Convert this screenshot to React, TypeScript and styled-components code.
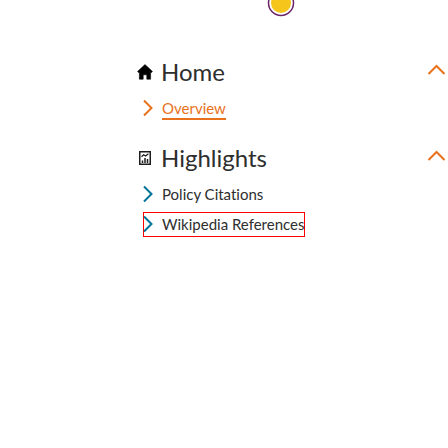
import React, { useState } from "react";
import styled, { createGlobalStyle } from "styled-components";

const GlobalStyle = createGlobalStyle`
  *, *::before, *::after { box-sizing: border-box; }
  body {
    margin: 0;
    background: #fff;
    color: #2e2e2e;
    font-family: Lato, "Open Sans", sans-serif;
    font-variant-ligatures: none;
  }
`;

const Page = styled.div`
  min-height: 100vh;
  overflow: hidden;
`;

const Header = styled.header`
  display: flex;
  justify-content: center;
  height: 52px;
  padding-left: 114px;
`;

const Marker = styled.svg`
  display: block;
  width: 28px;
  height: 28px;
  margin-top: -11px;
`;

const Nav = styled.nav`
  display: flex;
  flex-direction: column;
  gap: 12px;
  padding-left: 136px;
`;

const SectionButton = styled.button`
  display: flex;
  align-items: center;
  width: 100%;
  height: 40px;
  padding: 0 3px 0 0;
  border: 0;
  background: none;
  color: inherit;
  font: inherit;
  text-align: left;
  cursor: pointer;
`;

const SectionIcon = styled.svg`
  flex: none;
  width: 18px;
  height: 18px;
  margin-right: 7px;
`;

const SectionTitle = styled.span`
  flex: 1;
  font-size: 24px;
  line-height: 32px;
`;

const Caret = styled.svg<{ $open: boolean }>`
  flex: none;
  width: 18px;
  height: 12px;
  margin-bottom: 4px;
  transform: ${({ $open }) => ($open ? "none" : "rotate(180deg)")};
`;

const LinkList = styled.ul`
  display: flex;
  flex-direction: column;
  align-items: flex-start;
  gap: 5px;
  margin: 0;
  padding: 4px 0 5px 7px;
  list-style: none;
`;

const NavLink = styled.a<{ $outlined?: boolean }>`
  display: flex;
  align-items: center;
  height: 25px;
  padding-bottom: 1px;
  color: inherit;
  font-size: 15px;
  line-height: 20px;
  text-decoration: none;
  white-space: nowrap;
  box-shadow: ${({ $outlined }) => ($outlined ? "inset 0 0 0 1px #f00" : "none")};
`;

const Chevron = styled.svg<{ $active?: boolean }>`
  flex: none;
  width: 11px;
  height: 18px;
  margin-right: 8px;
  color: ${({ $active }) => ($active ? "#e9711c" : "#007398")};
`;

const LinkText = styled.span<{ $active?: boolean }>`
  color: ${({ $active }) => ($active ? "#e9711c" : "inherit")};
  box-shadow: ${({ $active }) => ($active ? "0 2px 0 #e9711c" : "none")};
`;

const HomeIcon = () => (
  <SectionIcon viewBox="0 0 18 18" aria-hidden="true">
    <path
      d="M9 1.6 16.4 8.4 15.6 9.4H14.6V16.2H10.8V11.8H7.2V16.2H3.4V9.4H2.4L1.6 8.4Z"
      fill="#000"
      stroke="#000"
      strokeWidth="0.6"
      strokeLinejoin="round"
    />
  </SectionIcon>
);

const ReportIcon = () => (
  <SectionIcon viewBox="0 0 18 18" aria-hidden="true" fill="none" stroke="#1c1c1c">
    <rect x="3.75" y="2.75" width="10.5" height="12.5" strokeWidth="1.5" />
    <path d="M5.5 7.8 7.6 5.8 9.6 7 12.4 4.8" strokeWidth="1.2" />
    <path d="M6.5 11.5V14M9 9V14M11.5 10V14" strokeWidth="1.5" />
  </SectionIcon>
);

type Item = { label: string; active?: boolean; outlined?: boolean };

const sections: { title: string; Icon: React.FC; items: Item[] }[] = [
  { title: "Home", Icon: HomeIcon, items: [{ label: "Overview", active: true }] },
  {
    title: "Highlights",
    Icon: ReportIcon,
    items: [{ label: "Policy Citations" }, { label: "Wikipedia References", outlined: true }],
  },
];

function NavSection({ title, Icon, items }: (typeof sections)[number]) {
  const [open, setOpen] = useState(true);
  return (
    <section>
      <SectionButton type="button" aria-expanded={open} onClick={() => setOpen(!open)}>
        <Icon />
        <SectionTitle>{title}</SectionTitle>
        <Caret $open={open} viewBox="0 0 18 12" aria-hidden="true">
          <path d="M1.5 10 9.5 2 17.5 10" fill="none" stroke="#e9711c" strokeWidth="2" />
        </Caret>
      </SectionButton>
      {open && (
        <LinkList>
          {items.map(({ label, active, outlined }) => (
            <li key={label}>
              <NavLink href="#" $outlined={outlined} aria-current={active ? "page" : undefined}>
                <Chevron $active={active} viewBox="0 0 11 18" aria-hidden="true">
                  <path d="M1 1.5 8.5 9 1 16.5" fill="none" stroke="currentColor" strokeWidth="2" />
                </Chevron>
                <LinkText $active={active}>{label}</LinkText>
              </NavLink>
            </li>
          ))}
        </LinkList>
      )}
    </section>
  );
}

export default function App() {
  return (
    <Page>
      <GlobalStyle />
      <Header>
        <Marker viewBox="0 0 28 28" aria-hidden="true">
          <circle cx="14" cy="14" r="12.5" fill="#fff" stroke="#6b2466" strokeWidth="1.5" />
          <circle cx="14" cy="14" r="10" fill="#f5c51b" />
        </Marker>
      </Header>
      <Nav aria-label="Sections">
        {sections.map((section) => (
          <NavSection key={section.title} {...section} />
        ))}
      </Nav>
    </Page>
  );
}
